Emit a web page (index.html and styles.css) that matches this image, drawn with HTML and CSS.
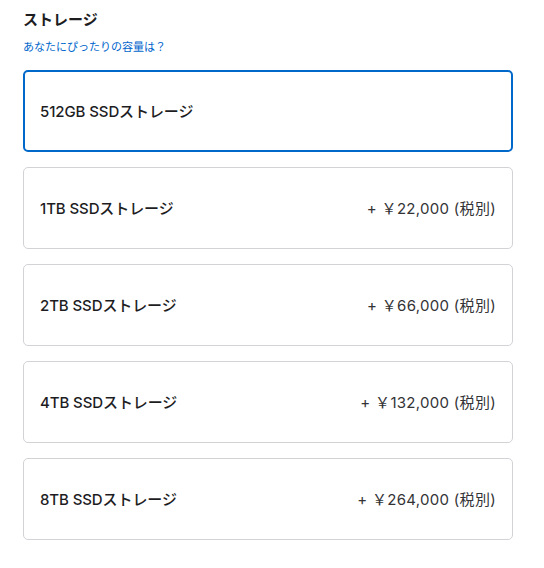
FILE: index.html
```html
<!DOCTYPE html>
<html lang="ja">
<head>
    <meta charset="UTF-8">
    <meta name="viewport" content="width=device-width, initial-scale=1.0">
    <title>ストレージ</title>
    <link rel="stylesheet" href="styles.css">
</head>
<body>
    <div class="storage">
        <h2 class="storage-title">ストレージ</h2>
        <a class="help-link" href="#">あなたにぴったりの容量は？</a>

        <div class="options">
            <label class="option selected">
                <span class="option-name">512GB SSDストレージ</span>
            </label>
            <label class="option">
                <span class="option-name">1TB SSDストレージ</span>
                <span class="option-price">+ ￥22,000 (税別)</span>
            </label>
            <label class="option">
                <span class="option-name">2TB SSDストレージ</span>
                <span class="option-price">+ ￥66,000 (税別)</span>
            </label>
            <label class="option">
                <span class="option-name">4TB SSDストレージ</span>
                <span class="option-price">+ ￥132,000 (税別)</span>
            </label>
            <label class="option">
                <span class="option-name">8TB SSDストレージ</span>
                <span class="option-price">+ ￥264,000 (税別)</span>
            </label>
        </div>
    </div>
</body>
</html>
```

FILE: styles.css
```css
body {
    margin: 0;
    background-color: #fff;
    color: #1d1d1f;
    font-family: Inter, "Noto Sans CJK JP", sans-serif;
}

.storage {
    width: 490px;
    padding: 10px 0 0 23px;
}

.storage-title {
    margin: 0;
    font-size: 15px;
    font-weight: 700;
    line-height: 20px;
}

.help-link {
    display: block;
    margin-top: 10px;
    font-size: 11px;
    line-height: 14px;
    color: #0066cc;
    text-decoration: none;
}

.options {
    display: flex;
    flex-direction: column;
    gap: 15px;
    margin-top: 16px;
}

.option {
    display: flex;
    justify-content: space-between;
    align-items: center;
    height: 82px;
    box-sizing: border-box;
    padding: 0 16px 2px;
    border: 1px solid #d2d2d7;
    border-radius: 5px;
    font-size: 15px;
    cursor: pointer;
}

.option.selected {
    border: 2px solid #0068c8;
    padding: 0 15px 2px;
}

.option-name {
    font-weight: 500;
    letter-spacing: -0.1px;
}

.option-price {
    font-weight: 400;
    color: #333336;
    letter-spacing: 0.3px;
}
```
